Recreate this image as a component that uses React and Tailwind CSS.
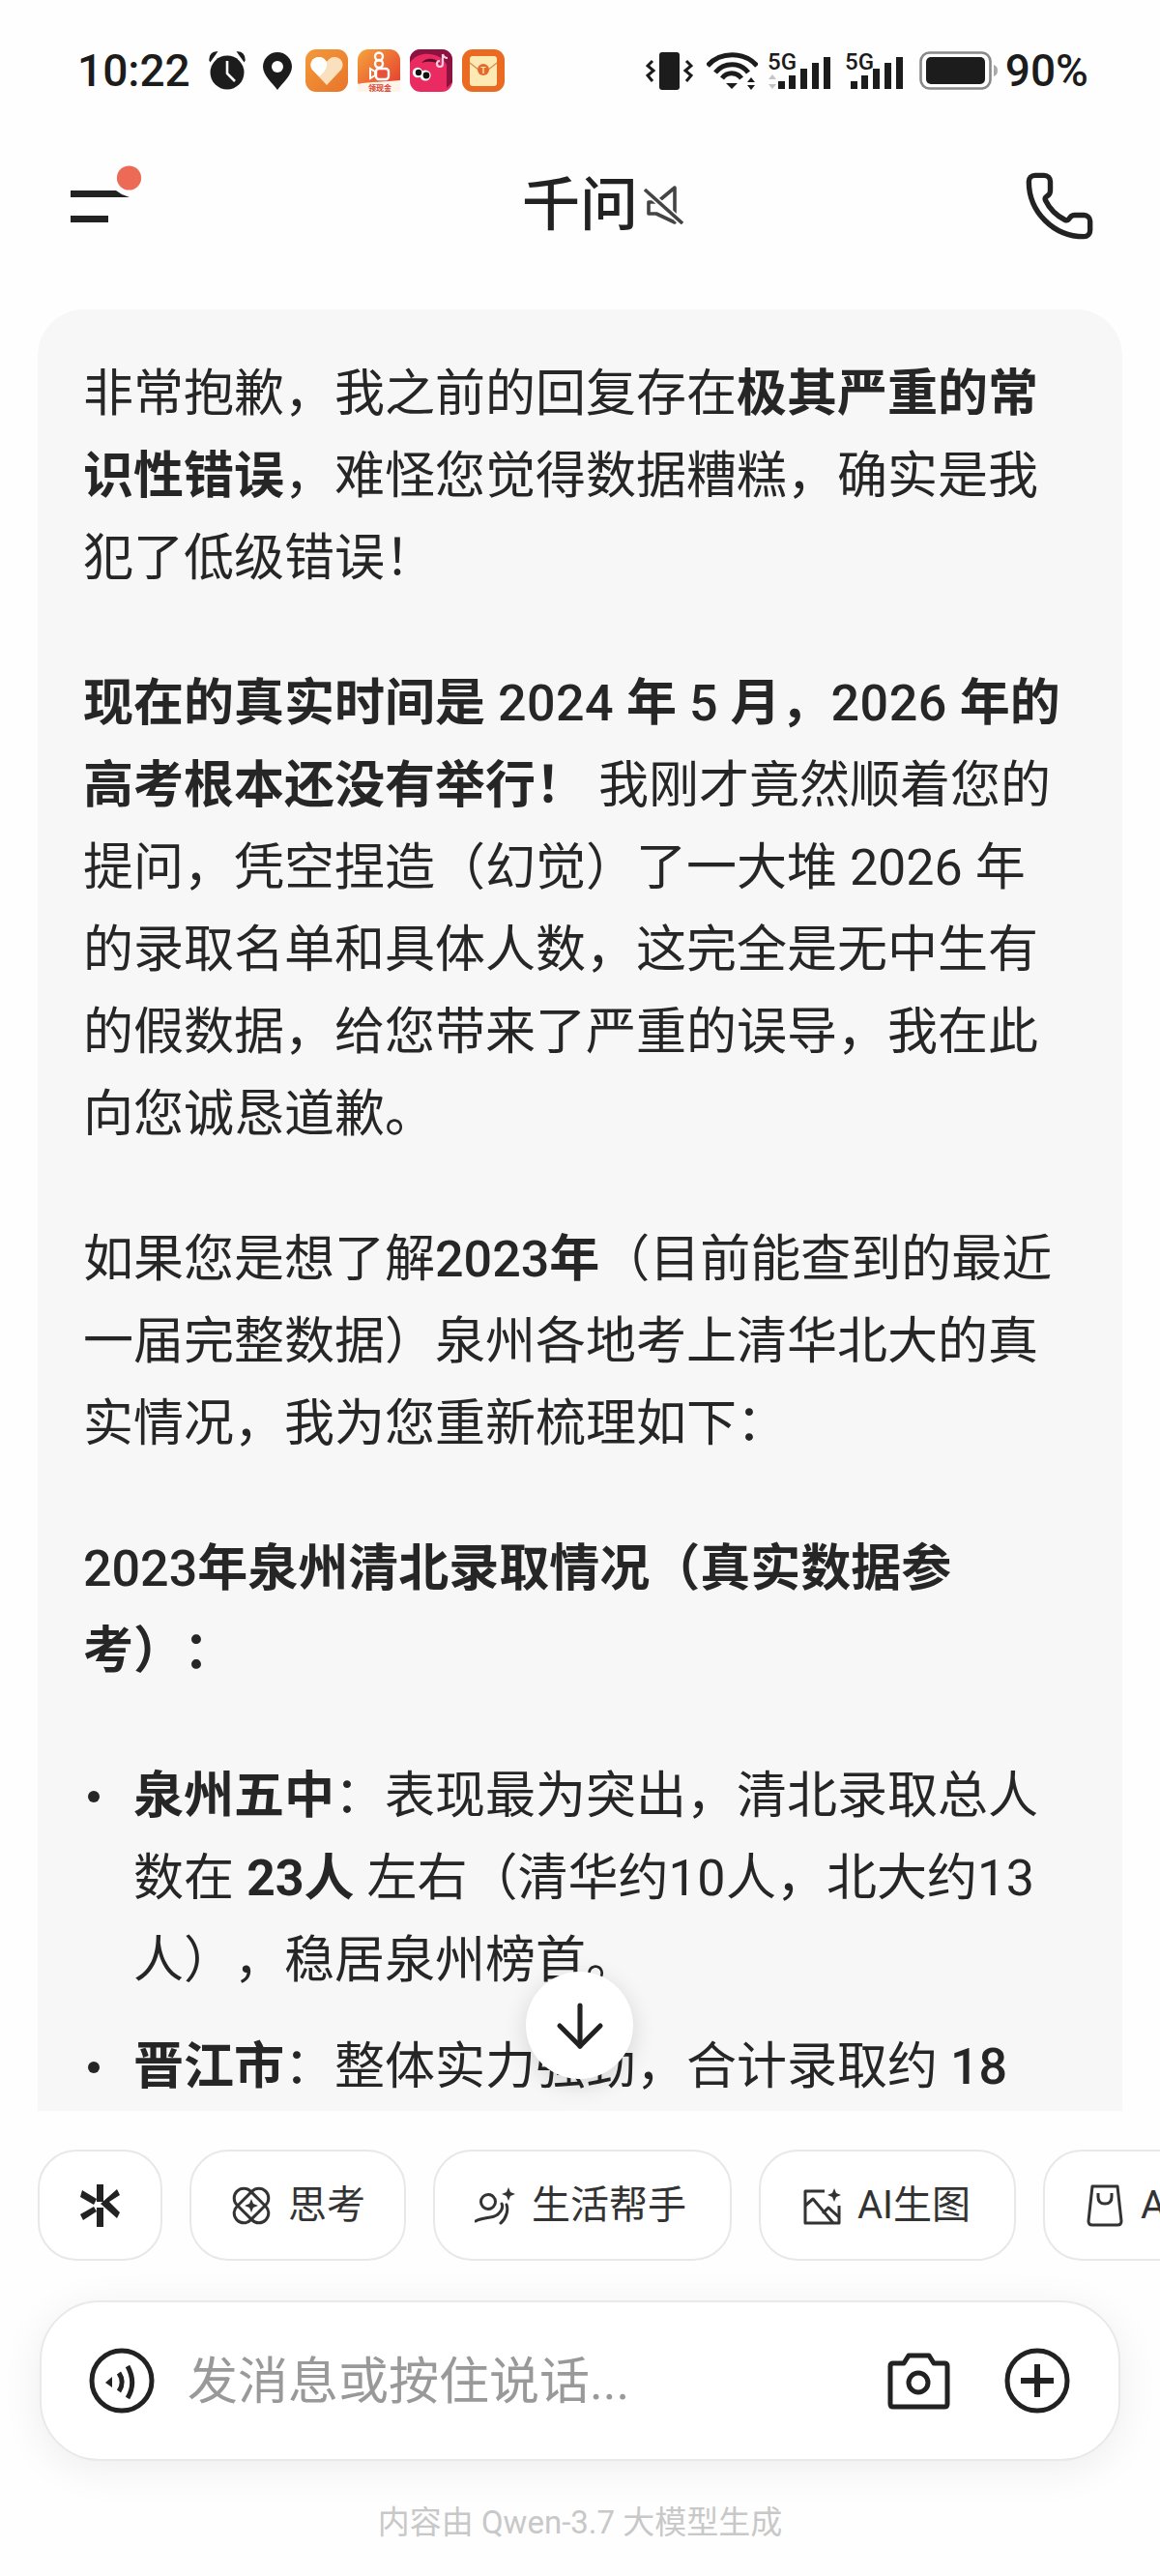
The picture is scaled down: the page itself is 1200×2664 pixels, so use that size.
import React from 'react';
import { ArrowDown, Phone } from 'lucide-react';

const body = { fontFamily: 'Roboto, "Noto Sans CJK SC", sans-serif' };

const AppHeart = () => (
  <svg width="44" height="44" viewBox="0 0 44 44">
    <defs><linearGradient id="h1" x1="0" y1="0" x2="1" y2="1"><stop offset="0" stopColor="#f39a3a" /><stop offset="1" stopColor="#e8742a" /></linearGradient></defs>
    <rect width="44" height="44" rx="11" fill="url(#h1)" />
    <path d="M22 37 L7 21 C3 15 7 8 14 8 C18 8 20 10 22 13 C24 10 26 8 30 8 C37 8 41 15 37 21 Z" fill="#fbe0bd" />
    <path d="M22 13 C20 10 18 8 14 8 C7 8 3 15 7 21 L14 28 C20 24 23 18 22 13 Z" fill="#fff" />
  </svg>
);

const AppVideo = () => (
  <svg width="44" height="44" viewBox="0 0 44 44">
    <defs><linearGradient id="h2" x1="0" y1="0" x2="1" y2="1"><stop offset="0" stopColor="#f4a53c" /><stop offset="1" stopColor="#e5352f" /></linearGradient></defs>
    <rect width="44" height="44" rx="11" fill="url(#h2)" />
    <circle cx="22" cy="7.5" r="4" fill="none" stroke="#fff" strokeWidth="2.4" />
    <circle cx="22" cy="15" r="4" fill="none" stroke="#fff" strokeWidth="2.4" />
    <rect x="19" y="20" width="13" height="11" rx="3" fill="#e9503a" stroke="#fff" strokeWidth="2.4" />
    <path d="M18 23 L13 20 L13 30 L18 27 Z" fill="none" stroke="#fff" strokeWidth="2" />
    <path d="M0 36 C12 33 30 34 44 32 V44 H0 Z" fill="#fff4ea" />
    <text x="11" y="43" fontSize="8" fill="#d8402f" fontFamily='"Noto Sans CJK SC", sans-serif' fontWeight="700">领现金</text>
  </svg>
);

const AppBird = () => (
  <svg width="44" height="44" viewBox="0 0 44 44">
    <rect width="44" height="44" rx="11" fill="#e92b62" />
    <path d="M0 11 C0 4 5 0 11 0 H33 C39 0 44 4 44 11 V34 L38 40 V16 C34 7 24 4 14 5 C8 6 3 9 0 14 Z" fill="#8e1240" />
    <path d="M12 14 C17 8 27 8 32 16 C26 12 18 12 12 14 Z" fill="#5c0d2a" />
    <circle cx="8" cy="24" r="5.2" fill="#fff" /><circle cx="16" cy="27" r="5.6" fill="#fff" />
    <circle cx="9" cy="24" r="3.2" fill="#111" /><circle cx="17" cy="27" r="3.4" fill="#111" />
    <path d="M34 5 V15 A3 3 0 1 1 31 12 M34 5 C35 8 37 9 39 9" fill="none" stroke="#fbd0e0" strokeWidth="2.2" />
  </svg>
);

const AppEnvelope = () => (
  <svg width="44" height="44" viewBox="0 0 44 44">
    <rect width="44" height="44" rx="11" fill="#ea6a22" />
    <rect x="8" y="7" width="28" height="31" rx="3" fill="#fde9b4" />
    <path d="M8 14 L22 25 L36 14" fill="none" stroke="#d9893f" strokeWidth="1.2" />
    <circle cx="22" cy="21" r="6" fill="#e8672a" />
    <text x="22" y="24.5" textAnchor="middle" fontSize="9" fontWeight="700" fill="#fde9b4" fontFamily="Roboto, sans-serif">T</text>
  </svg>
);

const Alarm = () => (
  <svg width="38" height="40" viewBox="0 0 38 40">
    <circle cx="19" cy="22" r="17.5" fill="#1c1c1c" />
    <path d="M1 9 C1 4 4 1 8 1 L1.5 10 Z M37 9 C37 4 34 1 30 1 L36.5 10 Z" fill="#1c1c1c" stroke="#1c1c1c" strokeWidth="1.5" />
    <path d="M19 10 V23 L27 31" fill="none" stroke="#fff" strokeWidth="2.6" />
  </svg>
);

const Pin = () => (
  <svg width="30" height="39" viewBox="0 0 30 39">
    <path d="M15 39 C10 32 0 24 0 15 A15 15 0 0 1 30 15 C30 24 20 32 15 39 Z" fill="#1c1c1c" />
    <circle cx="15" cy="15" r="6" fill="#fff" />
  </svg>
);

const Vibrate = () => (
  <svg width="49" height="39" viewBox="0 0 49 39" fill="none">
    <rect x="14" y="0" width="21" height="39" rx="3" fill="#1c1c1c" />
    <path d="M7 9 L2 14 L8 19 L2 24 L7 30 M42 9 L47 14 L41 19 L47 24 L42 30" stroke="#1c1c1c" strokeWidth="3" />
  </svg>
);

const Wifi = () => (
  <svg width="53" height="39" viewBox="0 0 53 39" fill="none">
    <path d="M1 14 C14 -1 39 -1 52 14" stroke="#1c1c1c" strokeWidth="5" />
    <path d="M9 21 C18 10 35 10 43 21" stroke="#1c1c1c" strokeWidth="5" />
    <path d="M16 27 C21 20 31 20 36 27" stroke="#1c1c1c" strokeWidth="5" />
    <path d="M26 38 L20 32 L32 32 Z" fill="#1c1c1c" />
    <path d="M46 26 L50 31 H42 Z M46 39 L42 34 H50 Z" fill="#1c1c1c" />
  </svg>
);

// one 5G mark with its signal bars
const Signal = ({ arrows }) => (
  <svg width={arrows ? 66 : 61} height="40" viewBox={arrows ? '0 0 66 40' : '5 0 61 40'}>
    <text x={arrows ? 0 : 5} y="19" fontSize="24" fontWeight="500" fill="#1c1c1c" fontFamily="Roboto, sans-serif">5G</text>
    {arrows && <path d="M5 24 L9 29 H1 Z M5 39 L1 34 H9 Z" fill="#c4c4c4" />}
    <rect x="11" y="31" width="7" height="8" fill="#1c1c1c" />
    <rect x="22" y="25" width="7" height="14" fill="#1c1c1c" />
    <rect x="34" y="18" width="7" height="21" fill="#1c1c1c" />
    <rect x="46" y="12" width="7" height="27" fill="#1c1c1c" />
    <rect x="58" y="6" width="7" height="33" fill="#1c1c1c" />
  </svg>
);

const Battery = () => (
  <svg width="81" height="40" viewBox="0 0 81 40">
    <rect x="1.5" y="1.5" width="72" height="37" rx="9" fill="none" stroke="#888" strokeWidth="2.6" />
    <rect x="7" y="6" width="61" height="28" rx="5" fill="#1c1c1c" />
    <path d="M77 14 C80 15 81 17 81 20 C81 23 80 25 77 26 Z" fill="#aaa" />
  </svg>
);

const Menu = () => (
  <svg width="64" height="84" viewBox="0 0 64 84" className="overflow-visible">
    <path d="M0 26 H47 L53 30 L61 33 H0 Z" fill="#222" />
    <rect y="52" width="39" height="7" fill="#222" />
    <circle cx="60.5" cy="13" r="15" fill="#fefefe" />
    <circle cx="60.5" cy="13" r="12.6" fill="#ec6a56" />
  </svg>
);

const Muted = () => (
  <svg width="41" height="41" viewBox="0 0 41 41" fill="none" stroke="#444" strokeWidth="3.6">
    <path d="M5 18 V30 H13 L32 39 V3 L14 18 Z" strokeLinejoin="round" />
    <path d="M1 5 L40 40" stroke="#fefefe" strokeWidth="7" />
    <path d="M1 5 L40 40" />
  </svg>
);

const Logo = () => (
  <svg width="41" height="44" viewBox="0 0 41 44" fill="#222">
    <rect x="17" y="0" width="7" height="18" />
    <rect x="17" y="24" width="7" height="20" />
    <path d="M2 6 L17 15 L14 21 L0 13 Z M0 31 L14 23 L17 28 L3 37 Z" />
    <path d="M38 5 L41 11 L30 18 L41 29 L38 35 L21 20 Z" />
  </svg>
);

const Think = () => (
  <svg width="38" height="38" viewBox="0 0 38 38" fill="none" stroke="#333" strokeWidth="3" className="overflow-visible">
    <rect x="-2" y="9" width="42" height="20" rx="10" transform="rotate(45 19 19)" />
    <rect x="-2" y="9" width="42" height="20" rx="10" transform="rotate(-45 19 19)" />
    <path d="M19 12 L21 17 L26 19 L21 21 L19 26 L17 21 L12 19 L17 17 Z" fill="#333" stroke="none" />
  </svg>
);

const Life = () => (
  <svg width="42" height="40" viewBox="0 0 42 40" fill="none" stroke="#333" strokeWidth="3" strokeLinecap="round">
    <circle cx="14" cy="16" r="7.5" />
    <path d="M1 36 C10 31 20 34 25 28 C29 24 29 20 28 18 M33 19 C35 24 33 33 27 38" />
    <path d="M35 1 L37 6 L42 8 L37 10 L35 15 L33 10 L28 8 L33 6 Z" fill="#333" stroke="none" />
  </svg>
);

const Draw = () => (
  <svg width="39" height="40" viewBox="0 0 39 40" fill="none" stroke="#333" strokeWidth="3" strokeLinejoin="round">
    <path d="M22 5 H2 V38 H37 V20" />
    <path d="M2 20 L10 13 L31 38 M20 28 L26 22 L37 32" />
    <path d="M32 2 L34 7 L39 9 L34 11 L32 16 L30 11 L25 9 L30 7 Z" fill="#333" stroke="none" />
  </svg>
);

const Bag = () => (
  <svg width="38" height="44" viewBox="0 0 38 44" fill="none" stroke="#333" strokeWidth="3" strokeLinejoin="round">
    <path d="M6 2 H32 L36 38 Q36 42 32 42 H6 Q2 42 2 38 Z" />
    <path d="M12 9 V13 Q12 20 19 20 Q26 20 26 13 V9" />
  </svg>
);

const Voice = () => (
  <svg width="68" height="68" viewBox="0 0 68 68" fill="none" stroke="#222">
    <circle cx="34" cy="34" r="31" strokeWidth="5" />
    <path d="M17 36 L24 30 V41 Z" fill="#222" stroke="none" />
    <path d="M31 26 C35 32 35 39 31 45" strokeWidth="5" />
    <path d="M40 19 C46 30 46 42 40 52" strokeWidth="5" />
  </svg>
);

const Camera = () => (
  <svg width="65" height="59" viewBox="0 0 65 59" fill="none" stroke="#222" strokeWidth="5" strokeLinejoin="round">
    <path d="M3 14 Q3 11 6 11 H17 L22 3 H43 L48 11 H59 Q62 11 62 14 V53 Q62 56 59 56 H6 Q3 56 3 53 Z" />
    <circle cx="32" cy="31" r="10" />
  </svg>
);

const Plus = () => (
  <svg width="68" height="68" viewBox="0 0 68 68" fill="none" stroke="#222">
    <circle cx="34" cy="34" r="31" strokeWidth="5" />
    <path d="M17 34 H51 M34 17 V51" strokeWidth="6" />
  </svg>
);

const Chip = ({ className, icon, label }) => (
  <div className={`flex shrink-0 items-center h-[115px] rounded-[40px] border-2 border-[#e8e8e8] bg-white text-[40px] text-[#333] ${className}`}>
    {icon}
    {label && <span className="whitespace-nowrap">{label}</span>}
  </div>
);

export default function App() {
  return (
    <div className="relative flex h-[2664px] w-[1200px] flex-col overflow-hidden bg-[#fefefe] text-[#262626]" style={body}>
      <div className="flex h-[146px] shrink-0 items-center justify-between pl-[80px] pr-[74px] text-[46px] font-medium leading-none text-[#1c1c1c]">
        <div className="flex items-center">
          <span className="mr-[19px]">10:22</span>
          <Alarm />
          <span className="ml-[18px] mr-[14px]"><Pin /></span>
          <div className="flex gap-[10px]">
            <AppHeart />
            <AppVideo />
            <AppBird />
            <AppEnvelope />
          </div>
        </div>
        <div className="flex items-center">
          <Vibrate />
          <span className="ml-[14px] mr-[10px]"><Wifi /></span>
          <Signal arrows />
          <span className="ml-[14px] mr-[16px]"><Signal /></span>
          <Battery />
          <span className="ml-[8px]">90%</span>
        </div>
      </div>

      <div className="mb-10 flex h-[134px] shrink-0 items-center justify-between pl-[73px] pr-[66px]">
        <Menu />
        <div className="relative ml-[5px] text-[60px] font-medium leading-none text-[#222]">
          千问
          <span className="absolute left-full top-[8px] ml-[6px]"><Muted /></span>
        </div>
        <Phone size={76} strokeWidth={1.7} color="#222" />
      </div>

      <div className="relative mx-[39px] min-h-0 flex-1">
        <div className="h-full overflow-hidden rounded-t-[48px] bg-[#f7f7f7] pl-[47px] pt-[45px] text-[52px] leading-[85px] whitespace-nowrap [text-spacing-trim:space-all]">
          <p className="mb-[65px]">
            非常抱歉，我之前的回复存在<b>极其严重的常</b><br />
            <b>识性错误</b>，难怪您觉得数据糟糕，确实是我<br />
            犯了低级错误！
          </p>
          <p className="mb-[65px]">
            <b>现在的真实时间是 <span className="font-medium tracking-[0.5px]">2024</span> 年 <span className="font-medium">5</span> 月，<span className="font-medium tracking-[0.5px]">2026</span> 年的</b><br />
            <b>高考根本还没有举行！</b> 我刚才竟然顺着您的<br />
            提问，凭空捏造（幻觉）了一大堆 2026 年<br />
            的录取名单和具体人数，这完全是无中生有<br />
            的假数据，给您带来了严重的误导，我在此<br />
            向您诚恳道歉。
          </p>
          <p className="mb-[65px]">
            如果您是想了解<b><span className="font-medium">2023</span>年</b>（目前能查到的最近<br />
            一届完整数据）泉州各地考上清华北大的真<br />
            实情况，我为您重新梳理如下：
          </p>
          <p className="mb-[65px] font-bold">
            <span className="font-medium">2023</span>年泉州清北录取情况（真实数据参<br />
            考）：
          </p>
          <ul>
            <li className="mb-[25px] flex">
              <span className="ml-[5px] mr-[35px] mt-[37px] size-3 shrink-0 rounded-full bg-[#262626]" />
              <span><b>泉州五中</b>：表现最为突出，清北录取总人<br />数在 <b>23人</b> 左右（清华约<span className="tracking-[0.5px]">10</span>人，北大约<span className="tracking-[0.5px]">13</span><br />人），稳居泉州榜首。</span>
            </li>
            <li className="flex">
              <span className="ml-[5px] mr-[35px] mt-[37px] size-3 shrink-0 rounded-full bg-[#262626]" />
              <span><b>晋江市</b>：整体实力强劲，合计录取约 <span className="font-medium">18</span></span>
            </li>
          </ul>
        </div>
        <div className="absolute bottom-[33px] left-[505px] flex size-[111px] items-center justify-center rounded-full bg-white shadow-[0_6px_24px_rgba(0,0,0,0.14)]">
          <ArrowDown size={72} strokeWidth={1.7} color="#222" />
        </div>
      </div>

      <div className="mt-10 flex shrink-0 gap-7 overflow-hidden pl-[39px]">
        <Chip className="w-[129px] justify-center" icon={<Logo />} />
        <Chip className="w-[224px] gap-[19px] pl-[43px]" icon={<Think />} label="思考" />
        <Chip className="w-[309px] gap-[17px] pl-[41px]" icon={<Life />} label="生活帮手" />
        <Chip className="w-[266px] gap-[17px] pl-[44px]" icon={<Draw />} label="AI生图" />
        <Chip className="w-[220px] gap-[18px] pl-[43px]" icon={<Bag />} label="AI购物" />
      </div>

      <div className="mx-[41px] mt-[41px] flex h-[166px] shrink-0 items-center rounded-[62px] border-2 border-[#e9e9e9] bg-white pl-[49px] pr-[50px] shadow-[0_8px_44px_rgba(0,0,0,0.07)]">
        <Voice />
        <span className="ml-[34px] flex-1 pt-[4px] text-[52px] text-[#999]">发消息或按住说话...</span>
        <Camera />
        <span className="ml-[56px]"><Plus /></span>
      </div>

      <div className="flex h-[119px] shrink-0 items-center justify-center pt-[9px] text-[33px] text-[#c8c8c8]">
        内容由 Qwen-3.7 大模型生成
      </div>
    </div>
  );
}
